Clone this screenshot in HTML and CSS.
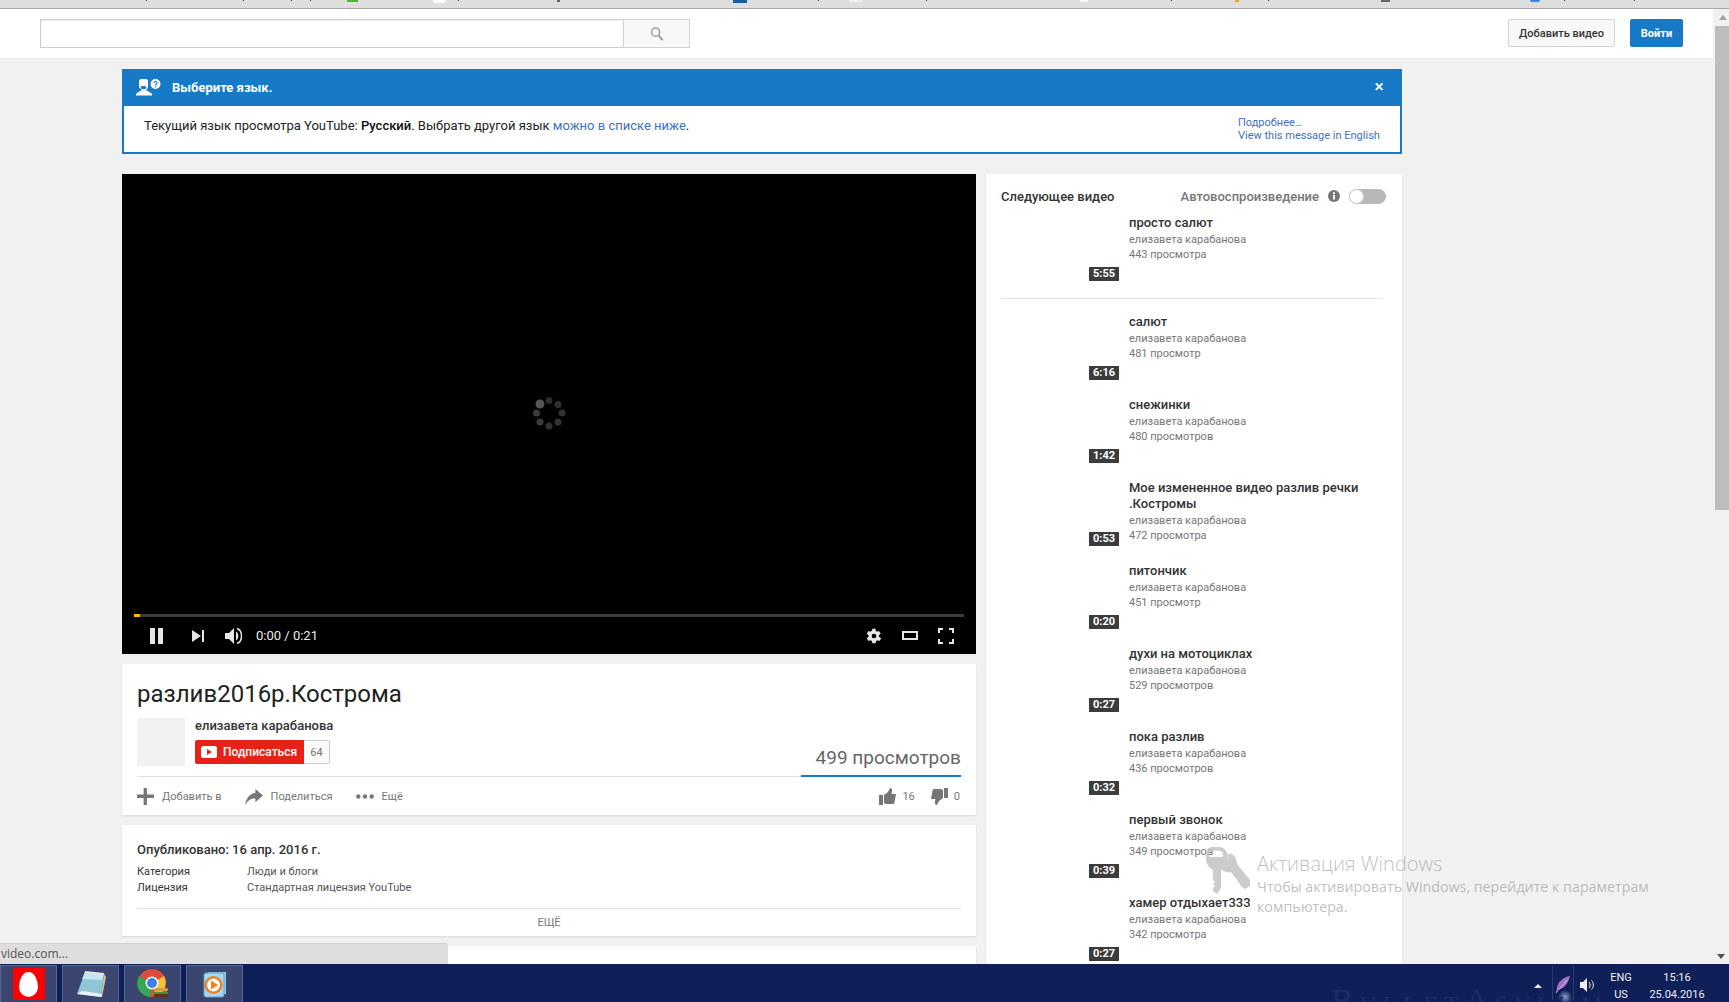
FILE: index.html
```html
<!DOCTYPE html>
<html lang="ru">
<head>
<meta charset="utf-8">
<title>разлив2016р.Кострома</title>
<link rel="stylesheet" href="styles.css">
</head>
<body>
<div class="app">
  <div class="browser-strip">
    <i class="tick t1"></i><i class="tick t2"></i><i class="tick t3"></i><i class="tick t4"></i><i class="tick t5"></i><i class="tick t6"></i><i class="tick t7"></i><i class="tick t8"></i><i class="tick t9"></i><i class="tick t10"></i><i class="tick t11"></i><i class="tick t12"></i><i class="tick t13"></i><i class="tick t14"></i><i class="tick t15"></i><i class="tick t16"></i><i class="tick t17"></i><i class="tick t18"></i><i class="tick t19"></i><i class="tick t20"></i>
  </div>
  <div class="viewport">
    <div class="page">
      <header class="masthead">
        <div class="search">
          <div class="search-input"></div>
          <button class="search-btn"><svg width="14" height="14" viewBox="0 0 14 15"><circle cx="5.500" cy="5.500" r="4.400" fill="none" stroke="#9a9a9a" stroke-width="1.600"/><path d="M8.600 9l4.400 5" stroke="#9a9a9a" stroke-width="2.200" fill="none"/></svg></button>
        </div>
        <div class="masthead-actions">
          <button class="btn btn-light">Добавить видео</button>
          <button class="btn btn-blue">Войти</button>
        </div>
      </header>
      <main class="content">
        <section class="banner">
          <div class="banner-head">
            <svg class="banner-icon" width="26" height="18" viewBox="0 0 26 18"><path d="M6 1h5c1 0 2 1 2 2v5c0 2-1 3-2 4l5 3c1 .6 1 1.500 1 2.500H1c0-1 0-2 1-2.500l5-3c-1-1-3-2-3-4V3c0-1 1-2 2-2z" fill="#fff"/><rect x="6" y="8" width="5" height="3" rx="1" fill="#167ac6"/><circle cx="20.500" cy="6" r="5" fill="#fff"/><path d="M19 5c0-2 3-2 3 0 0 1-1.500 1-1.500 2.500M20.500 8.500v1" stroke="#167ac6" stroke-width="1.200" fill="none"/></svg>
            <span class="banner-title">Выберите язык.</span>
            <span class="banner-close">✕</span>
          </div>
          <div class="banner-body">
            <p class="banner-text">Текущий язык просмотра YouTube: <b>Русский</b>. Выбрать другой язык <a>можно в списке ниже</a>.</p>
            <div class="banner-links"><a>Подробнее…</a><a>View this message in English</a></div>
          </div>
        </section>
        <div class="columns">
          <div class="main-col">
            <div class="player">
              <div class="stage">
                <svg width="36" height="36" viewBox="0 0 36 36"><circle cx="18" cy="5.500" r="3.500" fill="#2c2c2c"/><circle cx="27" cy="9.500" r="3.500" fill="#303030"/><circle cx="31" cy="18" r="3.500" fill="#333"/><circle cx="27" cy="27" r="3.500" fill="#333"/><circle cx="18" cy="31" r="3.500" fill="#333"/><circle cx="9" cy="27" r="3.500" fill="#3a3a3a"/><circle cx="5.500" cy="18" r="3.500" fill="#3c3c3c"/><circle cx="9" cy="9" r="4.500" fill="#555"/></svg>
              </div>
              <div class="progress"><div class="progress-fill"></div></div>
              <div class="controls">
                <svg class="c-pause" width="13" height="16" viewBox="0 0 13 16"><path d="M0 0h5v16H0zM8 0h5v16H8z" fill="#e6e6e6"/></svg>
                <svg class="c-next" width="12" height="12" viewBox="0 0 12 12"><path d="M0 0l9 6-9 6zM10 0h2v12h-2z" fill="#e6e6e6"/></svg>
                <svg class="c-vol" width="17" height="16" viewBox="0 0 17 16"><path d="M0 5h4l5-5v16l-5-5H0z" fill="#e6e6e6"/><path d="M11 3.500c3 1.500 3 7.500 0 9z" fill="#e6e6e6"/><path d="M12 .5c6 2 6 13 0 15" stroke="#e6e6e6" stroke-width="1.500" fill="none"/></svg>
                <span class="c-time">0:00 / 0:21</span>
                <div class="c-right">
                  <svg width="16" height="16" viewBox="0 0 24 24"><path fill="#e6e6e6" fill-rule="evenodd" d="M19.400 13.300a7.600 7.600 0 0 0 0-2.600l2.600-2-2.500-4.300-3 1.200a8 8 0 0 0-2.300-1.300L14.500 1h-5l-.5 3.300a8 8 0 0 0-2.300 1.300l-3-1.200L1.200 8.700l2.600 2a7.600 7.600 0 0 0 0 2.600l-2.600 2 2.500 4.300 3-1.200a8 8 0 0 0 2.300 1.300l.5 3.300h5l.5-3.300a8 8 0 0 0 2.300-1.300l3 1.200 2.500-4.300zM12 15.500a3.500 3.500 0 1 1 0-7 3.500 3.500 0 0 1 0 7z"/></svg>
                  <svg width="16" height="9" viewBox="0 0 16 9"><rect x="1" y="1" width="14" height="7" fill="none" stroke="#e6e6e6" stroke-width="2"/></svg>
                  <svg width="16" height="16" viewBox="0 0 16 16"><path d="M0 5V0h5v2H2v3zM11 0h5v5h-2V2h-3zM14 11h2v5h-5v-2h3zM0 11h2v3h3v2H0z" fill="#e6e6e6"/></svg>
                </div>
              </div>
            </div>
            <section class="card info-card">
              <h1 class="video-title">разлив2016р.Кострома</h1>
              <div class="owner-row">
                <div class="avatar"></div>
                <div class="owner">
                  <div class="owner-name">елизавета карабанова</div>
                  <div class="subscribe">
                    <span class="sub-btn"><svg width="16" height="12" viewBox="0 0 16 12"><rect width="16" height="12" rx="2.500" fill="#fff"/><path d="M6 3l5 3-5 3z" fill="#e62117"/></svg>Подписаться</span>
                    <span class="sub-count">64</span>
                  </div>
                </div>
                <div class="views">499 просмотров</div>
              </div>
              <div class="actions">
                <span class="action"><svg width="17" height="17" viewBox="0 0 18 18"><path d="M7 0h3.500v7H18v3.500h-7.500V18H7v-7.500H0V7h7z" fill="#767676"/></svg>Добавить в</span>
                <span class="action"><svg width="18" height="16" viewBox="0 0 19 17"><path d="M11 0l8 7-8 7v-4C6 10 3 12 0 17c1-7 5-12 11-13z" fill="#767676"/></svg>Поделиться</span>
                <span class="action"><svg width="18" height="5" viewBox="0 0 18 5"><circle cx="2.300" cy="2.500" r="2.200" fill="#767676"/><circle cx="9" cy="2.500" r="2.200" fill="#767676"/><circle cx="15.700" cy="2.500" r="2.200" fill="#767676"/></svg>Ещё</span>
                <span class="rating">
                  <span class="rate"><svg width="17" height="17" viewBox="0 0 17 17"><path d="M0 7h4v10H0zM5 7l4-3 2-4c2 0 2.500 2 2 4l-.5 2H17l-1.500 8.500c-.2 1-1 1.500-2 1.500H7l-2-1z" fill="#767676"/></svg>16</span>
                  <span class="rate"><svg width="17" height="17" viewBox="0 0 17 17"><path d="M17 10h-4V0h4zM12 10l-4 3-2 4c-2 0-2.500-2-2-4l.5-2H0l1.500-8.500C1.700 1.500 2.500 1 3.500 1H10l2 1z" fill="#767676"/></svg>0</span>
                </span>
              </div>
            </section>
            <section class="card desc-card">
              <div class="published">Опубликовано: 16 апр. 2016 г.</div>
              <dl class="meta-grid">
                <dt>Категория</dt><dd>Люди и блоги</dd>
                <dt>Лицензия</dt><dd>Стандартная лицензия YouTube</dd>
              </dl>
              <div class="more">ЕЩЁ</div>
            </section>
            <section class="card comments-card"></section>
          </div>
          <aside class="side">
            <div class="side-head">
              <span class="side-title">Следующее видео</span>
              <span class="autoplay">Автовоспроизведение</span>
              <svg class="info-icon" width="12" height="12" viewBox="0 0 12 12"><circle cx="6" cy="6" r="6" fill="#767676"/><rect x="5" y="5" width="2" height="4.500" fill="#fff"/><rect x="5" y="2.300" width="2" height="1.800" fill="#fff"/></svg>
              <span class="toggle"><i class="knob"></i></span>
            </div>
            <article class="item"><span class="badge">5:55</span><div class="item-text"><div class="item-title">просто салют</div><div class="item-meta">елизавета карабанова</div><div class="item-meta">443 просмотра</div></div></article>
            <hr class="side-sep">
            <article class="item"><span class="badge">6:16</span><div class="item-text"><div class="item-title">салют</div><div class="item-meta">елизавета карабанова</div><div class="item-meta">481 просмотр</div></div></article>
            <article class="item"><span class="badge">1:42</span><div class="item-text"><div class="item-title">снежинки</div><div class="item-meta">елизавета карабанова</div><div class="item-meta">480 просмотров</div></div></article>
            <article class="item"><span class="badge">0:53</span><div class="item-text"><div class="item-title">Мое измененное видео разлив речки .Костромы</div><div class="item-meta">елизавета карабанова</div><div class="item-meta">472 просмотра</div></div></article>
            <article class="item"><span class="badge">0:20</span><div class="item-text"><div class="item-title">питончик</div><div class="item-meta">елизавета карабанова</div><div class="item-meta">451 просмотр</div></div></article>
            <article class="item"><span class="badge">0:27</span><div class="item-text"><div class="item-title">духи на мотоциклах</div><div class="item-meta">елизавета карабанова</div><div class="item-meta">529 просмотров</div></div></article>
            <article class="item"><span class="badge">0:32</span><div class="item-text"><div class="item-title">пока разлив</div><div class="item-meta">елизавета карабанова</div><div class="item-meta">436 просмотров</div></div></article>
            <article class="item"><span class="badge">0:39</span><div class="item-text"><div class="item-title">первый звонок</div><div class="item-meta">елизавета карабанова</div><div class="item-meta">349 просмотров</div></div></article>
            <article class="item"><span class="badge">0:27</span><div class="item-text"><div class="item-title">хамер отдыхает333</div><div class="item-meta">елизавета карабанова</div><div class="item-meta">342 просмотра</div></div></article>
          </aside>
        </div>
      </main>
    </div>
    <div class="scrollbar">
      <span class="arrow-up"></span>
      <div class="thumb"></div>
      <span class="arrow-down"></span>
    </div>
    <div class="status-bubble">video.com...</div>
    <div class="watermark">
      <svg class="wm-key" width="46" height="48" viewBox="0 0 46 48"><g fill="#c4c4c4"><path fill-rule="evenodd" d="M8 0h7c5 0 9 4 9 11s-3 10-7 12v18l-4 6-4-3v-3l2-2-2-2 2-2-2-2V23c-4-2-7-6-7-12S3 0 8 0zM6 5c-1 1-1 3-1 5h14c0-2 0-4-1-5-3-2-9-2-12 0z"/><path d="M24 7c3-1 7 1 8 5l1 5 13 16v6l-5 3-3-2-11-15c-3 1-6 0-9-2 4-4 7-10 6-16z"/></g></svg>
      <div class="wm-text">
        <div class="wm-title">Активация Windows</div>
        <div class="wm-sub">Чтобы активировать Windows, перейдите к параметрам компьютера.</div>
      </div>
    </div>
  </div>
  <footer class="taskbar">
    <div class="task"><span class="egg-box"><i class="egg"></i></span></div>
    <div class="task"><svg width="32" height="30" viewBox="0 0 32 30"><path d="M10 3l19 2-3 23-24-3z" fill="#8fc7d8"/><path d="M10 3l19 2-2 6-20-1z" fill="#c5e6ee"/><path d="M29 5l2 3-4 20h-1z" fill="#d9c58a"/><path d="M10 3l19 2" stroke="#dfe5ea" stroke-width="2"/><path d="M2 25l24 3 1-3-20-3z" fill="#e9f3f6"/></svg></div>
    <div class="task"><svg width="32" height="32" viewBox="0 0 32 32"><circle cx="15" cy="15" r="14" fill="#dd4b3a"/><path d="M15 15L27 8a14 14 0 0 1-8 20z" fill="#f4c430"/><path d="M15 15l-1 14A14 14 0 0 1 2 8z" fill="#34a853"/><circle cx="15" cy="15" r="6.500" fill="#fff"/><circle cx="15" cy="15" r="5" fill="#3f7ee8"/><rect x="17" y="20" width="14" height="3.500" rx="1.700" fill="#d89b3c"/><rect x="17" y="24" width="14" height="2" fill="#4c8f2f"/><rect x="17" y="26" width="14" height="3" rx="1" fill="#5e3418"/></svg></div>
    <div class="task"><svg width="30" height="30" viewBox="0 0 30 30"><rect x="8" y="3" width="18" height="22" fill="#8cc6e8"/><rect x="4" y="4" width="20" height="24" rx="2" fill="#a8d8f0" stroke="#5f9fcc"/><circle cx="13.500" cy="16" r="9" fill="#f08020"/><circle cx="13.500" cy="16" r="6.500" fill="#fff"/><path d="M11 11.500l7 4.500-7 4.500z" fill="#f08020"/></svg></div>
    <div class="wall-text">BulletAsylum</div>
    <div class="tray">
      <span class="tray-arrow"></span>
      <i class="tray-sep"></i>
      <svg class="feather" width="16" height="22" viewBox="0 0 18 22"><path d="M17 1C9 2 3 8 2 15l-1 5 3-4c6 0 11-7 13-15z" fill="#a070c8"/><path d="M14 5L1 20" stroke="#e0d0f0" stroke-width=".8"/></svg>
      <i class="tray-sep"></i>
      <svg class="speaker" width="15" height="14" viewBox="0 0 15 14"><path d="M0 4h3l4-4v14l-4-4H0z" fill="#eee"/><path d="M9 4c1.500 1.500 1.500 4.500 0 6M11.500 2.500c2.500 2.500 2.500 6.500 0 9" stroke="#eee" fill="none"/></svg>
      <div class="tray-lang"><span>ENG</span><span>US</span></div>
      <div class="tray-clock"><span>15:16</span><span>25.04.2016</span></div>
    </div>
  </footer>
</div>
</body>
</html>
```

FILE: styles.css
```css
* { box-sizing: border-box; }
html, body { margin: 0; height: 100%; overflow: hidden; }
body { font-family: Roboto, "Liberation Sans", sans-serif; background: #f1f1f1; color: #222; }
button { font-family: inherit; }
a { color: #3f6fc4; }

.app { width: 1729px; height: 1002px; display: flex; flex-direction: column; overflow: hidden; }

.browser-strip { flex: 0 0 9px; background: #dedede; border-bottom: 1px solid #a9a9a9; display: flex; align-items: flex-start; }
.tick { display: block; flex: none; height: 1px; width: 1px; background: #333; }
.t1 { margin-left: 146px; }
.t2 { margin-left: 96px; }
.t3 { margin-left: 47px; }
.t4 { margin-left: 18px; }
.t5 { margin-left: 36px; width: 11px; height: 2px; background: #55b030; }
.t6 { margin-left: 75px; width: 13px; height: 3px; background: #fff; border-radius: 0 0 6px 6px; }
.t7 { margin-left: 12px; }
.t8 { margin-left: 98px; width: 3px; height: 2px; background: #666; }
.t9 { margin-left: 173px; width: 14px; height: 3px; background: #1a5f98; }
.t10 { margin-left: 71px; }
.t11 { margin-left: 30px; width: 13px; height: 2px; background: #efefef; }
.t12 { margin-left: 64px; }
.t13 { margin-left: 153px; width: 8px; height: 2px; background: #f6f6f6; }
.t14 { margin-left: 83px; }
.t15 { margin-left: 63px; width: 4px; height: 2px; background: #e8a820; }
.t16 { margin-left: 29px; }
.t17 { margin-left: 112px; width: 9px; height: 2px; background: #666; }
.t18 { margin-left: 140px; width: 10px; height: 2px; border-radius: 0 0 5px 5px; background: #3a86e8; }
.t19 { margin-left: 24px; }
.t20 { margin-left: 69px; }

.viewport { flex: 0 0 955px; display: flex; position: relative; overflow: hidden; }
.page { flex: 0 0 1713px; overflow: hidden; background: #f1f1f1; }

.masthead { height: 50px; background: #fff; border-bottom: 1px solid #e8e8e8; display: flex; align-items: flex-start; justify-content: space-between; padding: 10px 30px 0 40px; }
.search { display: flex; width: 650px; height: 29px; }
.search-input { flex: 0 0 583px; background: #fff; border: 1px solid #ccc; border-right: 0; box-shadow: inset 0 1px 2px #eee; }
.search-btn { flex: 1; background: #f8f8f8; border: 1px solid #d3d3d3; padding: 0; display: flex; align-items: center; justify-content: center; }
.masthead-actions { display: flex; gap: 15px; }
.btn { height: 28px; border-radius: 2px; font-size: 11px; padding: 0; }
.btn-light { width: 107px; background: #f8f8f8; border: 1px solid #d3d3d3; color: #333; font-weight: 500; }
.btn-blue { width: 53px; background: #167ac6; border: 1px solid #167ac6; color: #fff; font-weight: 700; }

.content { margin-left: 122px; width: 1280px; padding-top: 10px; }

.banner { height: 85px; border: 2px solid #167ac6; border-top: 0; background: #fff; }
.banner-head { height: 37px; margin: 0 -2px; background: #167ac6; color: #fff; display: flex; align-items: center; padding: 0 18px 1px 13px; }
.banner-icon { margin-right: 11px; }
.banner-title { font-size: 13px; font-weight: 700; flex: 1; }
.banner-close { font-size: 12px; font-weight: 700; }
.banner-body { display: flex; justify-content: space-between; padding: 0 20px 0 20px; height: 46px; }
.banner-text { margin: 12px 0 0; font-size: 13px; line-height: 16px; color: #222; }
.banner-text b { font-weight: 500; color: #111; }
.banner-links { display: flex; flex-direction: column; font-size: 11px; line-height: 13px; padding-top: 10px; width: 142px; }

.columns { display: flex; gap: 10px; margin-top: 20px; align-items: flex-start; }
.main-col { flex: 0 0 854px; display: flex; flex-direction: column; gap: 10px; }
.player { height: 480px; background: #000; display: flex; flex-direction: column; }
.stage { flex: 0 0 440px; display: flex; align-items: center; justify-content: center; padding-top: 38px; }
.progress { height: 3px; margin: 0 12px; background: #3c3c3c; }
.progress-fill { width: 6px; height: 3px; background: #f6c200; }
.controls { flex: 1; display: flex; align-items: center; padding: 0 22px 0 28px; color: #eee; }
.c-pause { margin-right: 29px; }
.c-next { margin-right: 21px; }
.c-vol { margin-right: 14px; }
.c-time { font-size: 13px; }
.c-right { margin-left: auto; display: flex; align-items: center; gap: 20px; }

.card { background: #fff; box-shadow: 0 1px 2px rgba(0,0,0,.1); padding: 0 15px; }
.info-card { height: 151px; }
.video-title { margin: 0; padding-top: 16px; font-size: 24px; line-height: 28px; font-weight: 400; color: #222; }
.owner-row { display: flex; margin-top: 10px; height: 59px; border-bottom: 1px solid #e2e2e2; position: relative; }
.avatar { width: 48px; height: 48px; background: #f1f1f1; margin-right: 10px; }
.owner-name { font-size: 13px; line-height: 16px; color: #333; font-weight: 500; }
.subscribe { display: flex; margin-top: 6px; height: 24px; }
.sub-btn { width: 109px; background: #e62117; color: #fff; font-size: 12px; font-weight: 500; border-radius: 2px 0 0 2px; display: flex; align-items: center; gap: 6px; padding-left: 6px; }
.sub-count { width: 26px; background: #fafafa; border: 1px solid #ccc; border-left: 0; border-radius: 0 2px 2px 0; font-size: 11px; color: #737373; display: flex; align-items: center; justify-content: center; }
.views { margin-left: auto; align-self: flex-end; width: 160px; height: 35px; border-bottom: 2px solid #167ac6; margin-bottom: -1px; padding-top: 4px; text-align: right; font-size: 19px; line-height: 24px; color: #666; white-space: nowrap; }
.actions { display: flex; align-items: center; height: 39px; font-size: 11px; color: #767676; }
.action { display: inline-flex; align-items: center; gap: 8px; margin-right: 23px; }
.rating { margin-left: auto; display: flex; gap: 16px; padding-right: 1px; }
.rate { display: inline-flex; align-items: center; gap: 6px; }

.desc-card { height: 111px; padding-top: 16px; }
.published { font-size: 13px; line-height: 18px; font-weight: 500; color: #333; }
.meta-grid { display: grid; grid-template-columns: 110px 1fr; margin: 5px 0 0; font-size: 11px; line-height: 16px; }
.meta-grid dt { color: #333; }
.meta-grid dd { margin: 0; color: #555; }
.more { margin-top: 12px; border-top: 1px solid #e2e2e2; text-align: center; font-size: 11px; line-height: 27px; color: #767676; }
.comments-card { height: 60px; }

.side { flex: 0 0 416px; height: 800px; background: #fff; padding: 0 15px; box-shadow: 0 1px 2px rgba(0,0,0,.1); overflow: hidden; }
.side-head { display: flex; align-items: center; height: 42px; padding: 3px 1px 0 0; }
.side-title { font-size: 13px; font-weight: 500; color: #333; flex: 1; margin-top: -1px; }
.autoplay { font-size: 13px; color: #767676; font-weight: 500; margin-right: 9px; }
.info-icon { margin-right: 9px; margin-top: -2px; }
.toggle { width: 37px; height: 15px; border-radius: 8px; background: #b8b8b8; position: relative; display: block; }
.knob { position: absolute; left: 0; top: 0; width: 15px; height: 15px; border-radius: 50%; background: #fff; border: 1px solid #ccc; }

.item { height: 69px; margin-bottom: 14px; display: flex; position: relative; padding-left: 128px; }
.item-text { width: 250px; }
.item-title { font-size: 13px; line-height: 16px; font-weight: 500; color: #333; margin: -1px 0 1px; }
.item-meta { font-size: 11px; line-height: 15px; color: #767676; }
.badge { position: absolute; left: 88px; top: 51px; width: 30px; height: 14px; background: #3c3c3c; color: #fff; font-size: 11px; font-weight: 700; line-height: 14px; text-align: center; }
.side-sep { border: 0; border-top: 1px solid #e2e2e2; margin: -1px 5px 16px 0; }

.scrollbar { flex: 1; background: #f1f1f1; position: relative; display: flex; flex-direction: column; align-items: stretch; padding-left: 2px; }
.arrow-up { height: 17px; flex: none; position: relative; }
.arrow-up::after { content: ""; position: absolute; left: 4px; top: 6px; border: 4px solid transparent; border-top: 0; border-bottom: 5px solid #a0a0a0; }
.thumb { height: 484px; background: #bdbdbd; flex: none; }
.arrow-down { position: absolute; right: 4px; bottom: 5px; border: 4px solid transparent; border-bottom: 0; border-top: 5px solid #505050; }

.status-bubble { position: absolute; left: 0; bottom: 0; width: 448px; height: 21px; background: #dedede; border-top: 1px solid #d0d0d0; border-radius: 0 3px 0 0; font-family: "Open Sans", sans-serif; font-size: 12px; line-height: 20px; color: #555; padding-left: 1px; }

.watermark { position: absolute; left: 1204px; top: 838px; display: flex; gap: 7px; color: rgba(150,150,150,.62); font-family: "Open Sans", sans-serif; pointer-events: none; }
.wm-key { opacity: .85; }
.wm-text { width: 400px; }
.wm-title { font-size: 20px; line-height: 30px; font-weight: 300; margin-top: 2px; }
.wm-sub { font-size: 14.250px; line-height: 20px; margin-top: -2px; }

.taskbar { flex: 1; background: radial-gradient(circle 7px at 1565px 33px, rgba(205,215,240,.7), rgba(205,215,240,0)), #0f1f57; display: flex; align-items: flex-end; position: relative; color: #fff; overflow: hidden; }
.task { width: 57px; height: 37px; margin-right: 5px; background: #3a4570; border: 1px solid #5b6690; border-bottom: 0; display: flex; align-items: center; justify-content: center; }
.egg-box { width: 32px; height: 32px; background: #f00; display: flex; align-items: center; justify-content: center; }
.egg { display: block; width: 19px; height: 25px; background: #fff; border-radius: 50% 50% 50% 50% / 60% 60% 40% 40%; }
.wall-text { position: absolute; left: 1331px; top: 20px; font-family: "Liberation Serif", serif; font-size: 34px; line-height: 34px; font-variant: small-caps; letter-spacing: 5.800px; color: #1a2c6a; white-space: nowrap; }
.tray { margin-left: auto; height: 38px; display: flex; align-items: center; position: relative; font-family: Roboto, sans-serif; font-size: 11px; color: #eee; padding-right: 25px; }
.tray-arrow { border: 4px solid transparent; border-top: 0; border-bottom: 4px solid #eee; margin-right: 10px; margin-top: 5px; }
.tray-sep { display: block; width: 1px; height: 34px; background: #2c3a72; }
.feather { margin: 4px 2px 0; }
.speaker { margin: 3px 13px 0 6px; }
.tray-lang, .tray-clock { display: flex; flex-direction: column; align-items: center; line-height: 17px; padding-top: 5px; }
.tray-lang { width: 26px; margin-right: 16px; }
.tray-clock { width: 54px; }
```
